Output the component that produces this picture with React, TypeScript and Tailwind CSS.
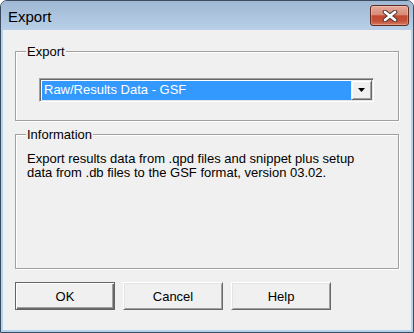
import React from "react";

const font = "font-['Liberation_Sans',Arial,sans-serif]";

function Btn({ label, def }: { label: string; def?: boolean }) {
  return (
    <button
      className={
        "w-[100px] h-[28px] bg-[#f0f0f0] text-[13px] text-black leading-none flex items-center justify-center " +
        (def
          ? "border border-[#646464] shadow-[inset_1px_1px_0_#ffffff,inset_-1px_-1px_0_#696969,inset_-2px_-2px_0_#a0a0a0]"
          : "border border-t-white border-l-white border-b-[#696969] border-r-[#696969] shadow-[inset_1px_1px_0_#e3e3e3,inset_-1px_-1px_0_#a0a0a0]")
      }
    >
      {label}
    </button>
  );
}

export default function App() {
  return (
    <div className={"w-[414px] h-[333px] bg-white " + font}>
      <div className="w-[414px] h-[333px] rounded-t-[7px] border border-[#3a4b5f] bg-[#b4d3ee] flex flex-col overflow-hidden">
        {/* Title bar */}
        <div className="h-[29px] shrink-0 flex items-center justify-between pl-[7px] pr-[4px] bg-gradient-to-b from-[#9fb8d3] to-[#b9d0e8]">
          <span className="text-[15px] text-black mt-[3px]">Export</span>
          <div className="w-[39px] h-[21px] rounded-[3px] border border-[#5e2a22] bg-[linear-gradient(#e7aa9b_0%,#d98b78_45%,#c2492f_52%,#c4523a_80%,#d67c62_100%)] shadow-[inset_0_0_0_1px_rgba(255,255,255,0.25)] flex items-center justify-center">
            <svg width="16" height="12" viewBox="0 0 16 12">
              <path d="M3 2 L13 10 M13 2 L3 10" stroke="#4a3430" strokeWidth="4.6" strokeLinecap="round" fill="none" />
              <path d="M3 2 L13 10 M13 2 L3 10" stroke="#ffffff" strokeWidth="2.8" strokeLinecap="round" fill="none" />
            </svg>
          </div>
        </div>
        {/* Client area */}
        <div className="flex-1 mx-[2px] mb-[2px] bg-[#f0f0f0] px-[12px] flex flex-col">
          <fieldset className="mt-[14px] h-[77px] border border-[#a0a0a0] pl-[11px] shadow-[inset_1px_1px_0_#ffffff,1px_1px_0_#ffffff]">
            <legend className="ml-[-1px] px-[1px] bg-[#f0f0f0] text-[13px] leading-[15px] text-black">Export</legend>
            <div className="ml-[12px] mt-[19px] w-[335px] h-[24px] border border-t-[#a0a0a0] border-l-[#a0a0a0] border-b-white border-r-white shadow-[inset_1px_1px_0_#696969,inset_-1px_-1px_0_#e3e3e3] bg-white flex p-[1px]">
              <div className="flex-1 bg-[#3399ff] text-white text-[13px] leading-[18px] pl-[2px] ml-[1px] mt-[1px]">
                Raw/Results Data - GSF
              </div>
              <div className="w-[21px] h-[20px] bg-[#f0f0f0] border border-t-[#f0f0f0] border-l-[#f0f0f0] border-b-[#696969] border-r-[#696969] shadow-[inset_1px_1px_0_#ffffff,inset_-1px_-1px_0_#a0a0a0] flex items-center justify-center">
                <svg width="7" height="4" viewBox="0 0 7 4">
                  <path d="M0 0 H7 L3.5 4 Z" fill="#000" />
                </svg>
              </div>
            </div>
          </fieldset>
          <fieldset className="mt-[6px] h-[142px] border border-[#a0a0a0] pl-[11px] shadow-[inset_1px_1px_0_#ffffff,1px_1px_0_#ffffff]">
            <legend className="ml-[-1px] px-[1px] bg-[#f0f0f0] text-[13px] leading-[15px] text-black">Information</legend>
            <p className="mt-[10px] text-[13px] leading-[14px] text-black">
              Export results data from .qpd files and snippet plus setup
              <br />
              data from .db files to the GSF format, version 03.02.
            </p>
          </fieldset>
          <div className="mt-[13px] flex gap-[8px]">
            <Btn label="OK" def />
            <Btn label="Cancel" />
            <Btn label="Help" />
          </div>
        </div>
      </div>
    </div>
  );
}
